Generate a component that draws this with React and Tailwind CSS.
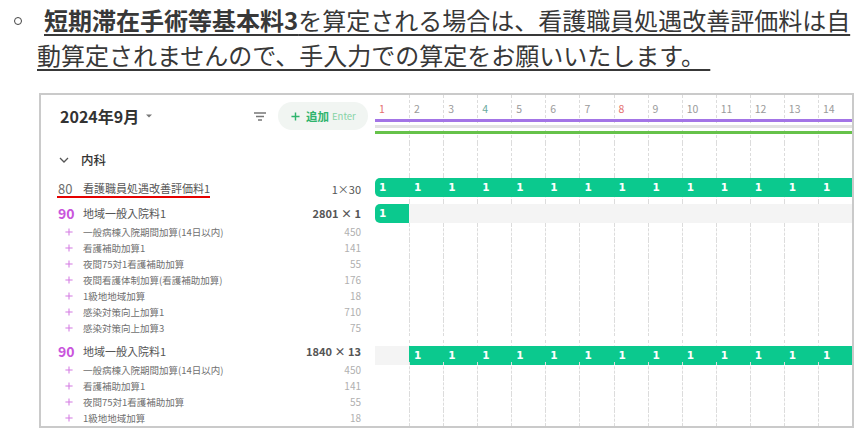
import React from 'react'

const days = Array.from({ length: 14 }, (_, i) => i + 1)

const stayItems = [
  ['一般病棟入院期間加算(14日以内)', 450],
  ['看護補助加算1', 141],
  ['夜間75対1看護補助加算', 55],
  ['夜間看護体制加算(看護補助加算)', 176],
  ['1級地地域加算', 18],
  ['感染対策向上加算1', 710],
  ['感染対策向上加算3', 75],
]
const shortStayItems = [stayItems[0], stayItems[1], stayItems[2], stayItems[4]]

const dayColor = (d) => {
  if (d === 1 || d === 8) return 'text-[#e46f6f]'
  if (d === 4) return 'text-[#6aa99c]'
  return 'text-[#9a9a9a]'
}

// one calendar row: name column on the left, 14 day cells on the right
function Row({ height, left, cell }) {
  return (
    <div className={`flex ${height}`}>
      <div className="flex w-[334px] shrink-0 items-center pl-[17px] pr-[14px]">{left}</div>
      <div className="grid flex-1 grid-cols-14">
        {days.map((d) => (
          <div key={d} className={d > 1 ? 'border-l border-dashed border-[#dcdcdc]' : ''}>
            {cell ? cell(d) : null}
          </div>
        ))}
      </div>
    </div>
  )
}

function Count({ top, first }) {
  return (
    <div
      className={`${top} h-[19px] bg-[#0bc98e] font-['DejaVu_Sans',sans-serif] text-[10.5px] font-bold leading-[19px] text-white ${
        first ? 'rounded-l-[5px] pl-[4px]' : '-ml-px pl-[5px]'
      }`}
    >
      1
    </div>
  )
}

function Band({ top, first }) {
  return <div className={`${top} h-[19px] bg-[#f4f4f4] ${first ? '' : '-ml-px'}`} />
}

function Plus({ size, color, stroke }) {
  return (
    <svg width={size} height={size} viewBox="0 0 10 10" className="shrink-0">
      <path d="M5 0.5v9M0.5 5h9" stroke={color} strokeWidth={stroke} />
    </svg>
  )
}

function SubRow({ name, points }) {
  return (
    <Row
      height="h-[16px]"
      left={
        <>
          <span className="flex w-[25px] pl-[7px]">
            <Plus size={8} color="#d47be2" stroke={1.3} />
          </span>
          <span className="text-[9.5px] leading-[16px] text-[#707070]">{name}</span>
          <span className="ml-auto text-[10px] leading-[16px] text-[#b0b0b0]">{points}</span>
        </>
      }
    />
  )
}

function StayRow({ total, height, cell }) {
  return (
    <Row
      height={height}
      left={
        <>
          <span className="w-[25px] text-[14px] font-semibold leading-[16px] text-[#c955dc]">90</span>
          <span className="text-[11px] leading-[16px] text-[#555]">地域一般入院料1</span>
          <span className="ml-auto text-[11px] font-semibold leading-[16px] text-[#555]">{total}</span>
        </>
      }
      cell={cell}
    />
  )
}

export default function App() {
  return (
    <div className="h-[437px] w-[864px] overflow-hidden bg-white font-['Noto_Sans_CJK_JP','Noto_Sans',sans-serif]">
      <p className="pt-[2px] pl-[37px] indent-[-23px] text-[24px] leading-[35px] text-[#383838] underline decoration-2 underline-offset-[4px]">
        <span className="mr-[22px] inline-block h-[8px] w-[8px] rounded-full border-[1.5px] border-[#444] align-[5px]" />
        <b>短期滞在手術等基本料3</b>を算定される場合は、看護職員処遇改善評価料は自
        <br />
        動算定されませんので、手入力での算定をお願いいたします。&nbsp;
      </p>

      <div className="ml-[39px] mt-[21px] h-[335px] w-[815px] overflow-hidden border-2 border-[#cacaca]">
        {/* month header + day numbers */}
        <div className="flex h-[48px]">
          <div className="flex w-[334px] shrink-0 items-start pl-[19px] pr-[7px] pt-[7px]">
            <div className="flex h-[28px] flex-1 items-center">
              <span className="text-[16px] font-bold leading-[20px] text-[#333]">2024年9月</span>
              <svg width="6" height="4" viewBox="0 0 6 4" className="ml-[7px]">
                <path d="M0 0.5h6L3 3.5z" fill="#777" />
              </svg>
              <svg width="12" height="9" viewBox="0 0 12 9" className="ml-auto mr-[12px]">
                <path d="M0 1h12M2 4.5h8M4 8h4" stroke="#777" strokeWidth="1.3" />
              </svg>
            </div>
            <button className="flex h-[28px] w-[90px] items-center rounded-full bg-[#f1f5f2] pl-[13px]">
              <Plus size={9} color="#2fb46d" stroke={1.6} />
              <span className="ml-[6px] text-[11.5px] font-semibold leading-[14px] text-[#2fb46d]">追加</span>
              <span className="ml-[3px] text-[9.5px] leading-[14px] text-[#86d3a6]">Enter</span>
            </button>
          </div>
          <div className="grid flex-1 grid-cols-14">
            {days.map((d) => (
              <div key={d} className={d > 1 ? 'border-l border-dashed border-[#dcdcdc]' : ''}>
                <div className={`h-[20px] pl-[4px] pt-[8px] text-[10.5px] leading-[12px] ${dayColor(d)}`}>{d}</div>
                <div className={`mt-[4px] h-[3px] bg-[#a374e6] ${d > 1 ? '-ml-px' : ''}`} />
                <div className={`mt-[3px] h-[3px] bg-[#e2e2e2] ${d > 1 ? '-ml-px' : ''}`} />
                <div className={`mt-[3px] h-[3px] bg-[#66c24a] ${d > 1 ? '-ml-px' : ''}`} />
              </div>
            ))}
          </div>
        </div>

        {/* department */}
        <Row
          height="h-[33px]"
          left={
            <>
              <svg width="10" height="6" viewBox="0 0 10 6" className="ml-[1px]">
                <path d="M1 1l4 4 4-4" fill="none" stroke="#555" strokeWidth="1.3" />
              </svg>
              <span className="ml-[12px] text-[12.5px] font-medium leading-[16px] text-[#333]">内科</span>
            </>
          }
        />

        {/* nursing staff allowance */}
        <Row
          height="h-[26px]"
          left={
            <>
              <div className="-ml-px flex items-center border-b-2 border-[#e50000] pl-px">
                <span className="w-[25px] text-[13px] leading-[15px] text-[#6e6e6e]">80</span>
                <span className="text-[11px] leading-[15px] text-[#555]">看護職員処遇改善評価料1</span>
              </div>
              <span className="ml-auto text-[11px] leading-[15px] text-[#555]">1×30</span>
            </>
          }
          cell={(d) => <Count top="mt-[2px]" first={d === 1} />}
        />

        <StayRow
          total="2801 × 1"
          height="h-[22px]"
          cell={(d) => (d === 1 ? <Count top="mt-[2px]" first /> : <Band top="mt-[2px]" />)}
        />
        {stayItems.map(([name, points]) => (
          <SubRow key={name} name={name} points={points} />
        ))}

        <StayRow
          total="1840 × 13"
          height="h-[26px] pt-[4px]"
          cell={(d) => (d === 1 ? <Band top="mt-[6px]" first /> : <Count top="mt-[6px]" />)}
        />
        {shortStayItems.map(([name, points]) => (
          <SubRow key={name} name={name} points={points} />
        ))}
      </div>
    </div>
  )
}
